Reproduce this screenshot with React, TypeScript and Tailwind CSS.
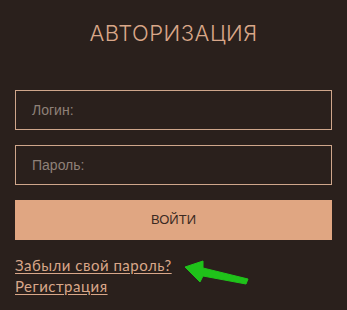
import React from "react";

export default function App() {
  return (
    <div className="w-[347px] h-[310px] bg-[#2a201c] relative overflow-hidden" style={{ fontFamily: "Lato, 'Open Sans', 'Liberation Sans', sans-serif" }}>
      <div className="pt-[21px] text-center text-[#d9a789] text-[22px] font-light tracking-[0.5px] leading-[24px]" style={{ fontFamily: "Inter, Lato, sans-serif", fontWeight: 300 }}>
        АВТОРИЗАЦИЯ
      </div>
      <div className="px-[15px] pt-[45px] flex flex-col">
        <div className="h-[40px] w-[317px] border border-[#cfa68b] flex items-center pl-[16px] text-[14px] text-[#8f8078]" style={{ fontFamily: "'Liberation Sans', Arial, sans-serif" }}>
          Логин:
        </div>
        <div className="h-[40px] w-[317px] mt-[15px] border border-[#cfa68b] flex items-center pl-[16px] text-[14px] text-[#8f8078]" style={{ fontFamily: "'Liberation Sans', Arial, sans-serif" }}>
          Пароль:
        </div>
        <div className="h-[40px] w-[317px] mt-[15px] bg-[#e0a682] flex items-center justify-center text-[13px] text-[#3b2a22]" style={{ fontFamily: "'Liberation Sans', Arial, sans-serif" }}>
          ВОЙТИ
        </div>
        <div className="mt-[15px] flex flex-col items-start text-[15px] leading-[21px] text-[#d9a789] tracking-[0.5px]">
          <span className="underline underline-offset-2">Забыли свой пароль?</span>
          <span className="underline underline-offset-2">Регистрация</span>
        </div>
      </div>
      <svg className="absolute left-[180px] top-[255px]" width="72" height="34" viewBox="0 0 72 34">
        <polygon points="5,12 23,6 23,13 68,24 66,29 23,21 20,27" fill="#1fc21a" strokeLinejoin="round" stroke="#1fc21a" strokeWidth="1" />
      </svg>
    </div>
  );
}
